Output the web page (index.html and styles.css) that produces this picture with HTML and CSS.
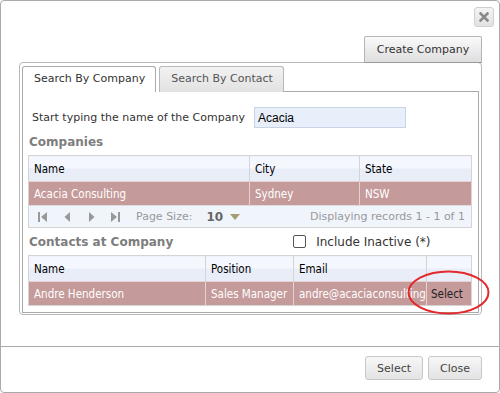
FILE: index.html
```html
<!DOCTYPE html>
<html lang="en">
<head>
    <meta charset="UTF-8">
    <meta name="viewport" content="width=device-width, initial-scale=1.0">
    <title>Find Company</title>
    <link rel="stylesheet" href="styles.css">
</head>
<body>

<div class="dialog">
    <div class="dialog-top">
        <button class="btn-close" title="Close">
            <svg width="10" height="10" viewBox="0 0 10 10"><path d="M1.5 1.5 L8.5 8.5 M8.5 1.5 L1.5 8.5" stroke="#8a8a8a" stroke-width="2.6" stroke-linecap="square"/></svg>
        </button>
    </div>

    <div class="dialog-body">
        <div class="toolbar">
            <button class="btn btn-create">Create Company</button>
        </div>

        <div class="panel">
            <div class="tabs">
                <div class="tab active">Search By Company</div>
                <div class="tab">Search By Contact</div>
                <div class="tab-fill"></div>
            </div>

            <div class="tab-panel">
                <div class="search-row">
                    <label class="search-label">Start typing the name of the Company</label>
                    <input class="search-input" type="text" value="Acacia">
                </div>

                <div class="section-title">Companies</div>
                <table class="grid">
                    <colgroup>
                        <col class="c-cname"><col class="c-city"><col class="c-state">
                    </colgroup>
                    <thead>
                        <tr><th>Name</th><th>City</th><th>State</th></tr>
                    </thead>
                    <tbody>
                        <tr class="selected"><td>Acacia Consulting</td><td>Sydney</td><td>NSW</td></tr>
                    </tbody>
                    <tfoot>
                        <tr><td colspan="3">
                            <div class="pager">
                                <span class="pg-btn">
                                    <svg width="10" height="12" viewBox="0 0 10 12"><rect x="0" y="1" width="2" height="10" fill="#999"/><path d="M9 1 L3 6 L9 11 Z" fill="#999"/></svg>
                                </span>
                                <span class="pg-btn">
                                    <svg width="7" height="12" viewBox="0 0 7 12"><path d="M6 1 L0.5 6 L6 11 Z" fill="#999"/></svg>
                                </span>
                                <span class="pg-btn">
                                    <svg width="7" height="12" viewBox="0 0 7 12"><path d="M1 1 L6.5 6 L1 11 Z" fill="#999"/></svg>
                                </span>
                                <span class="pg-btn">
                                    <svg width="10" height="12" viewBox="0 0 10 12"><path d="M1 1 L7 6 L1 11 Z" fill="#999"/><rect x="8" y="1" width="2" height="10" fill="#999"/></svg>
                                </span>
                                <span class="pg-label">Page Size:</span>
                                <span class="pg-size">10</span>
                                <svg class="pg-drop" width="10" height="6" viewBox="0 0 10 6"><path d="M0 0 L10 0 L5 6 Z" fill="#a59d6c"/></svg>
                                <span class="pg-info">Displaying records 1 - 1 of 1</span>
                            </div>
                        </td></tr>
                    </tfoot>
                </table>

                <div class="section-row">
                    <span class="section-title">Contacts at Company</span>
                    <label class="check"><span class="check-box"></span>Include Inactive (*)</label>
                </div>

                <div class="grid-wrap">
                    <table class="grid">
                        <colgroup>
                            <col class="c-pname"><col class="c-pos"><col class="c-email"><col class="c-sel">
                        </colgroup>
                        <thead>
                            <tr><th>Name</th><th>Position</th><th>Email</th><th></th></tr>
                        </thead>
                        <tbody>
                            <tr class="selected"><td>Andre Henderson</td><td>Sales Manager</td><td>andre@acaciaconsulting.com.au</td><td class="sel-cell">Select</td></tr>
                        </tbody>
                    </table>
                    <svg class="highlight" width="85" height="47" viewBox="0 0 85 47"><ellipse cx="42.5" cy="23.5" rx="40" ry="21" fill="none" stroke="#e4282c" stroke-width="2"/></svg>
                </div>
            </div>
        </div>
    </div>

    <div class="dialog-footer">
        <button class="btn">Select</button>
        <button class="btn">Close</button>
    </div>
</div>

</body>
</html>
```

FILE: styles.css
```css
body {
    margin: 0;
    font-family: "DejaVu Sans", Verdana, sans-serif;
    font-size: 11px;
    color: #333;
    background: #fff;
}
.dialog {
    width: 500px;
    height: 393px;
    box-sizing: border-box;
    border: 1px solid #aaa;
    border-radius: 4px;
    display: flex;
    flex-direction: column;
}
.dialog-top {
    display: flex;
    justify-content: flex-end;
    padding: 6px 5px 0 0;
}
.btn-close {
    width: 20px;
    height: 20px;
    padding: 0;
    border: 1px solid #d0d0d0;
    border-radius: 3px;
    background: linear-gradient(#f4f4f4, #e2e2e2);
    display: flex;
    align-items: center;
    justify-content: center;
}
.dialog-body {
    flex: 1;
    padding: 9px 17px 0 18px;
}
.toolbar {
    display: flex;
    justify-content: flex-end;
}
.btn {
    font-family: "DejaVu Sans", Verdana, sans-serif;
    font-size: 11px;
    color: #444;
    border: 1px solid #c8c8c8;
    border-radius: 3px;
    background: linear-gradient(#f7f7f7, #e3e3e3);
    padding: 0;
}
.btn-create {
    width: 118px;
    height: 27px;
    color: #333;
    border-color: #b4b4b4;
    border-bottom-color: #999;
    border-radius: 2px 2px 0 0;
    background: linear-gradient(#fafafa, #dedede);
}
.panel {
    border: 1px solid #b8b8b8;
    border-radius: 4px;
    padding: 3px 2px 1px 2px;
    margin-top: -1px;
}
.tabs {
    display: flex;
    height: 26px;
}
.tab {
    padding: 0 10px 0 11px;
    line-height: 24px;
    border: 1px solid #b8b8b8;
    border-bottom: none;
    border-radius: 3px 3px 0 0;
    background: linear-gradient(#f2f2f2, #e2e2e2);
    color: #555;
    margin-right: 3px;
}
.tab.active {
    background: #fff;
    color: #333;
    border-color: #aaa;
}
.tab-fill {
    flex: 1;
    border-bottom: 1px solid #aaa;
    margin-left: -3px;
}
.tab-panel {
    border: 1px solid #aaa;
    border-top: none;
    padding: 15px 5px 6px 5px;
}
.search-row {
    display: flex;
    align-items: center;
    padding-left: 4px;
}
.search-label {
    width: 222px;
}
.search-input {
    width: 152px;
    height: 21px;
    box-sizing: border-box;
    border: 1px solid #c9d3e6;
    background: #e8eefa;
    font-family: "Liberation Sans", Arial, sans-serif;
    font-size: 12px;
    color: #000;
    padding: 0 3px;
    margin: 0;
}
.section-title {
    font-weight: bold;
    font-size: 12px;
    color: #7d7d7d;
    padding-left: 1px;
}
.search-row + .section-title {
    margin-top: 7px;
    line-height: 15px;
    margin-bottom: 5px;
}
.grid {
    width: 443px;
    border-collapse: collapse;
    table-layout: fixed;
    border: 1px solid #d4d4d4;
    font-family: "DejaVu Sans Condensed", Tahoma, sans-serif;
    font-size: 11.5px;
}
.c-cname { width: 221px; }
.c-city { width: 110px; }
.c-state { width: 112px; }
.c-pname { width: 177px; }
.c-pos { width: 88px; }
.c-email { width: 133px; }
.c-sel { width: 45px; }
.grid th {
    height: 25px;
    padding: 0 5px;
    text-align: left;
    font-weight: normal;
    color: #000;
    background: linear-gradient(#f4f7fd 50%, #e8edf8 50%);
    border-right: 1px solid #d4d4d4;
}
.grid td {
    height: 23px;
    padding: 0 5px;
    white-space: nowrap;
    overflow: hidden;
}
.grid tr.selected td {
    background: #c59a9a;
    color: #fff;
    border-right: 1px solid #e4d2d2;
    border-top: 1px solid #e4d2d2;
}
.grid tr.selected td.sel-cell {
    color: #222;
    padding-left: 4px;
}
.grid tfoot td {
    height: 21px;
    padding: 0;
    background: #f0f4fb;
    border-top: 1px solid #dcdcdc;
}
.pager {
    display: flex;
    align-items: center;
    padding-left: 2px;
    font-family: "DejaVu Sans", Verdana, sans-serif;
    font-size: 11px;
}
.pg-btn {
    width: 24px;
    height: 21px;
    display: flex;
    align-items: center;
    justify-content: center;
}
.pg-label {
    color: #999;
    margin-left: 9px;
}
.pg-size {
    color: #666;
    font-weight: bold;
    font-size: 12px;
    margin-left: 14px;
}
.pg-drop {
    margin-left: 7px;
}
.pg-info {
    margin-left: auto;
    margin-right: 6px;
    color: #999;
}
.section-row {
    display: flex;
    align-items: center;
    height: 27px;
}
.check {
    display: flex;
    align-items: center;
    margin-left: 120px;
    font-size: 12px;
    color: #333;
}
.check-box {
    width: 11px;
    height: 11px;
    border: 1px solid #555;
    border-radius: 2px;
    background: #fff;
    margin-right: 10px;
}
.grid-wrap {
    position: relative;
}
.highlight {
    position: absolute;
    left: 378px;
    top: 14px;
}
.dialog-footer {
    height: 46px;
    box-sizing: border-box;
    border-top: 1px solid #aaa;
    display: flex;
    justify-content: flex-end;
    align-items: flex-start;
    gap: 5px;
    padding: 9px 17px 0 0;
}
.dialog-footer .btn {
    height: 24px;
    padding: 0 11px;
}
```
